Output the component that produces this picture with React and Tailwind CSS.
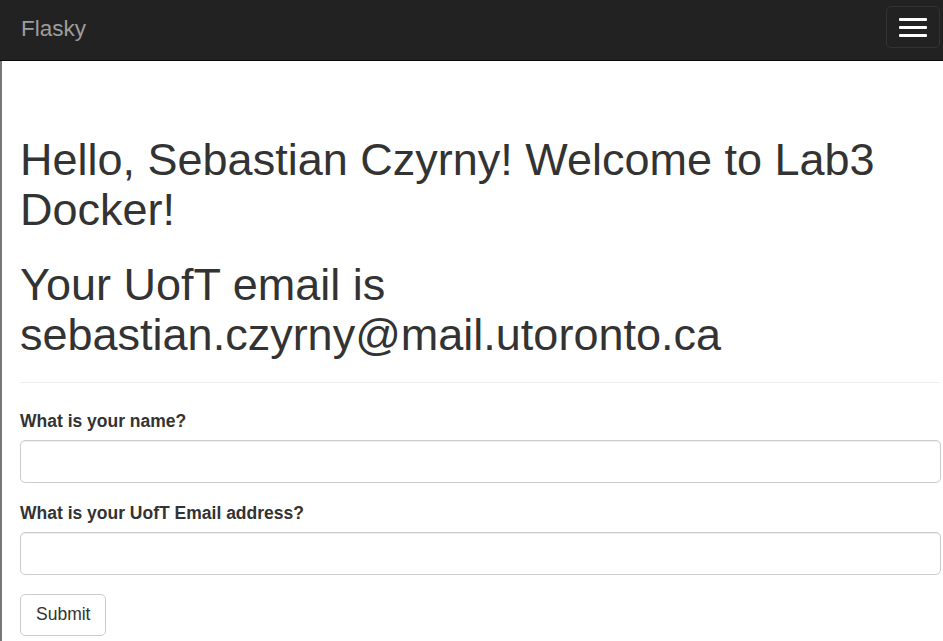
import { useState } from 'react';

function App() {
  const [name, setName] = useState('');
  const [email, setEmail] = useState('');

  return (
    <div className="min-h-screen bg-white text-[#333] font-['Liberation_Sans',Arial,sans-serif]">
      {/* Navbar */}
      <nav className="h-[61px] bg-[#222] border-b border-[#080808] flex items-center justify-between pl-[21px] pr-[3px]">
        <a href="#" className="text-[22.5px] leading-[25px] text-[#9d9d9d] -mt-[3px]">
          Flasky
        </a>
        <button className="w-[54px] h-[42px] border border-[#333] rounded-[5px] flex flex-col items-center justify-center gap-[5px] -mt-[6px]">
          <span className="block w-[28px] h-[3px] bg-white rounded-[1px]" />
          <span className="block w-[28px] h-[3px] bg-white rounded-[1px]" />
          <span className="block w-[28px] h-[3px] bg-white rounded-[1px]" />
        </button>
      </nav>

      {/* Main Content */}
      <div className="border-l-2 border-[#777] pl-[18px] pr-[2px] pt-[74px] min-h-[580px]">
        <div className="pb-[11px] border-b border-[#eee] mb-[26px] mr-px">
          <h1 className="text-[45px] leading-[1.1] font-normal">
            Hello, Sebastian Czyrny! Welcome to Lab3 Docker!
          </h1>
          <h1 className="text-[45px] leading-[1.1] font-normal mt-[26px] mb-[12px]">
            Your UofT email is sebastian.czyrny@mail.utoronto.ca
          </h1>
        </div>

        <form onSubmit={(e) => e.preventDefault()}>
          <div className="mb-[18.75px]">
            <label className="block text-[17.5px] leading-[25px] font-bold mb-[6px]">What is your name?</label>
            <input
              type="text"
              value={name}
              onChange={(e) => setName(e.target.value)}
              className="block w-full h-[42.5px] px-[15px] border border-[#ccc] rounded-[5px] shadow-[inset_0_1px_1px_rgba(0,0,0,0.075)] outline-none"
            />
          </div>
          <div className="mb-[18.75px]">
            <label className="block text-[17.5px] leading-[25px] font-bold mb-[6px]">
              What is your UofT Email address?
            </label>
            <input
              type="text"
              value={email}
              onChange={(e) => setEmail(e.target.value)}
              className="block w-full h-[42.5px] px-[15px] border border-[#ccc] rounded-[5px] shadow-[inset_0_1px_1px_rgba(0,0,0,0.075)] outline-none"
            />
          </div>
          <button
            type="submit"
            className="h-[42.5px] px-[15px] text-[17.5px] leading-[25px] text-[#333] bg-white border border-[#ccc] rounded-[5px]"
          >
            Submit
          </button>
        </form>
      </div>
    </div>
  );
}

export default App;
